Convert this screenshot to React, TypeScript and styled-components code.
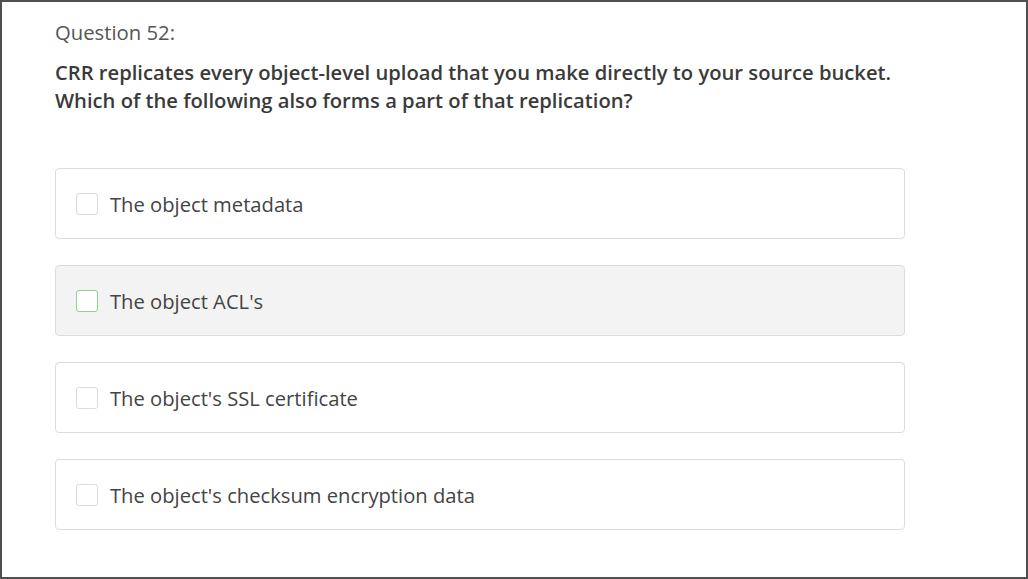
import React from "react";
import styled, { createGlobalStyle } from "styled-components";

const Global = createGlobalStyle`
  html, body { margin: 0; padding: 0; background: #fff; }
  body { font-family: "Open Sans", "Liberation Sans", sans-serif; }
  * { box-sizing: border-box; }
`;

const Frame = styled.div`
  width: 1028px;
  height: 579px;
  border: 2px solid #505050;
  padding: 16px 0 0 53px;
  background: #fff;
`;

const Label = styled.div`
  font-size: 20.3px;
  color: #555;
  line-height: 28px;
`;

const Prompt = styled.div`
  margin-top: 12px;
  font-size: 20.2px;
  font-weight: 600;
  color: #3a3a3a;
  line-height: 28px;
`;

const Options = styled.div`
  margin-top: 54px;
  display: flex;
  flex-direction: column;
  gap: 26px;
  width: 850px;
`;

const Option = styled.div<{ $hover?: boolean }>`
  height: 71px;
  border: 1px solid #dcdcdc;
  border-radius: 4px;
  background: ${(p) => (p.$hover ? "#f3f3f3" : "#fff")};
  display: flex;
  align-items: center;
  padding-left: 20px;
  gap: 12px;
`;

const Box = styled.span<{ $hover?: boolean }>`
  width: 22px;
  height: 22px;
  border: 1px solid ${(p) => (p.$hover ? "#8fd08f" : "#dcdcdc")};
  border-radius: 3px;
  background: #fff;
  flex: none;
`;

const Text = styled.span`
  font-size: 20.2px;
  color: #444;
`;

const options = [
  "The object metadata",
  "The object ACL's",
  "The object's SSL certificate",
  "The object's checksum encryption data",
];

export default function App() {
  return (
    <>
      <Global />
      <Frame>
        <Label>Question 52:</Label>
        <Prompt>
          CRR replicates every object-level upload that you make directly to your source bucket.
          <br />
          Which of the following also forms a part of that replication?
        </Prompt>
        <Options>
          {options.map((o, i) => (
            <Option key={o} $hover={i === 1}>
              <Box $hover={i === 1} />
              <Text>{o}</Text>
            </Option>
          ))}
        </Options>
      </Frame>
    </>
  );
}
